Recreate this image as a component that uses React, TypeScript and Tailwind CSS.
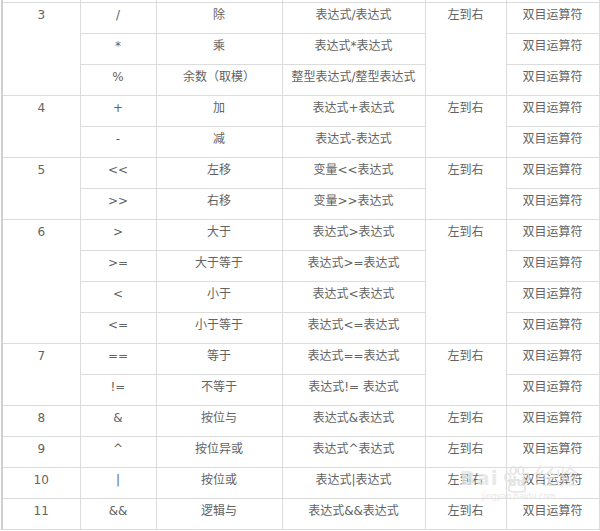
type Row = {
  op: string;
  name: string;
  usage: string;
  note: string;
};

type Group = {
  level: string;
  dir: string;
  rows: Row[];
};

const groups: Group[] = [
  {
    level: "3",
    dir: "左到右",
    rows: [
      { op: "/", name: "除", usage: "表达式/表达式", note: "双目运算符" },
      { op: "*", name: "乘", usage: "表达式*表达式", note: "双目运算符" },
      { op: "%", name: "余数（取模）", usage: "整型表达式/整型表达式", note: "双目运算符" },
    ],
  },
  {
    level: "4",
    dir: "左到右",
    rows: [
      { op: "+", name: "加", usage: "表达式+表达式", note: "双目运算符" },
      { op: "-", name: "减", usage: "表达式-表达式", note: "双目运算符" },
    ],
  },
  {
    level: "5",
    dir: "左到右",
    rows: [
      { op: "<<", name: "左移", usage: "变量<<表达式", note: "双目运算符" },
      { op: ">>", name: "右移", usage: "变量>>表达式", note: "双目运算符" },
    ],
  },
  {
    level: "6",
    dir: "左到右",
    rows: [
      { op: ">", name: "大于", usage: "表达式>表达式", note: "双目运算符" },
      { op: ">=", name: "大于等于", usage: "表达式>=表达式", note: "双目运算符" },
      { op: "<", name: "小于", usage: "表达式<表达式", note: "双目运算符" },
      { op: "<=", name: "小于等于", usage: "表达式<=表达式", note: "双目运算符" },
    ],
  },
  {
    level: "7",
    dir: "左到右",
    rows: [
      { op: "==", name: "等于", usage: "表达式==表达式", note: "双目运算符" },
      { op: "!=", name: "不等于", usage: "表达式!= 表达式", note: "双目运算符" },
    ],
  },
  {
    level: "8",
    dir: "左到右",
    rows: [{ op: "&", name: "按位与", usage: "表达式&表达式", note: "双目运算符" }],
  },
  {
    level: "9",
    dir: "左到右",
    rows: [{ op: "^", name: "按位异或", usage: "表达式^表达式", note: "双目运算符" }],
  },
  {
    level: "10",
    dir: "左到右",
    rows: [{ op: "|", name: "按位或", usage: "表达式|表达式", note: "双目运算符" }],
  },
  {
    level: "11",
    dir: "左到右",
    rows: [{ op: "&&", name: "逻辑与", usage: "表达式&&表达式", note: "双目运算符" }],
  },
];

const cell =
  "h-[31px] border border-[#dcdcdc] px-1 pt-[3px] align-top text-center leading-[18px]";

function Watermark() {
  return (
    <div className="pointer-events-none absolute left-[460px] top-[466px] select-none text-[#e4e4e4] opacity-80">
      <div className="flex items-end">
        <span className="text-[20px] font-bold leading-[20px] tracking-[1px]">Bai</span>
        <div className="relative ml-[2px] flex flex-col items-center">
          {/* paw */}
          <svg width="32" height="28" viewBox="0 0 34 30" className="mb-[-6px]">
            <g fill="none" stroke="#e2e2e2" strokeWidth="2">
              <ellipse cx="7" cy="12" rx="3" ry="4" />
              <ellipse cx="13" cy="5" rx="3" ry="4" />
              <ellipse cx="21" cy="5" rx="3" ry="4" />
              <ellipse cx="27" cy="12" rx="3" ry="4" />
              <path d="M8 25 C8 18 14 15 17 15 C20 15 26 18 26 25 C26 29 8 29 8 25 Z" />
            </g>
          </svg>
          <span className="absolute bottom-[0px] text-[12px] font-bold leading-[12px] text-[#dedede]">
            du
          </span>
        </div>
        <span className="ml-[2px] text-[22px] leading-[22px] tracking-[-1px]">经验</span>
      </div>
      <div className="mt-[4px] pl-[22px] text-[8px] leading-[10px] text-[#e2e2e2]">
        jingyan.baidu.com
      </div>
    </div>
  );
}

export default function App() {
  return (
    <div
      className="relative h-[531px] w-[600px] overflow-hidden bg-white text-[12px] text-[#636363]"
      style={{ fontFamily: '"DejaVu Sans", "Noto Sans CJK SC", sans-serif' }}
    >
      <table className="ml-[1px] w-[597px] table-fixed border-collapse">
        <colgroup>
          <col className="w-[78px]" />
          <col className="w-[76px]" />
          <col className="w-[126px]" />
          <col className="w-[143px]" />
          <col className="w-[81px]" />
          <col className="w-[93px]" />
        </colgroup>
        <tbody>
          {/* tail of the row above */}
          <tr>
            <td className="h-[2px] border border-t-0 border-l-2 border-[#dcdcdc] border-l-[#d0d0d0] p-0" />
            <td className="h-[2px] border border-t-0 border-[#dcdcdc] p-0" />
            <td className="h-[2px] border border-t-0 border-[#dcdcdc] p-0" />
            <td className="h-[2px] border border-t-0 border-[#dcdcdc] p-0" />
            <td className="h-[2px] border border-t-0 border-[#dcdcdc] p-0" />
            <td className="h-[2px] border border-t-0 border-[#dcdcdc] p-0" />
          </tr>
          {groups.map((g) =>
            g.rows.map((r, i) => (
              <tr key={g.level + r.op}>
                {i === 0 && (
                  <td
                    rowSpan={g.rows.length}
                    className={cell + " border-l-2 border-l-[#d0d0d0]"}
                  >
                    {g.level}
                  </td>
                )}
                <td className={cell}>{r.op}</td>
                <td className={cell}>{r.name}</td>
                <td className={cell + " whitespace-nowrap"}>{r.usage}</td>
                {i === 0 && (
                  <td rowSpan={g.rows.length} className={cell}>
                    {g.dir}
                  </td>
                )}
                <td className={cell}>{r.note}</td>
              </tr>
            ))
          )}
        </tbody>
      </table>
      <Watermark />
    </div>
  );
}
